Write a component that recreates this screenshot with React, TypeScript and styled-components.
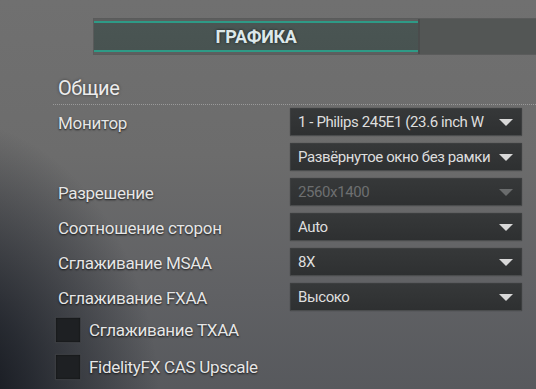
import React from "react";
import styled, { createGlobalStyle } from "styled-components";

const Global = createGlobalStyle`
  html, body { margin: 0; padding: 0; }
  body {
    width: 536px; height: 389px; overflow: hidden;
    font-family: "Roboto", "Liberation Sans", sans-serif;
  }
`;

const Page = styled.div`
  position: relative;
  width: 536px;
  height: 389px;
  overflow: hidden;
  background:
    radial-gradient(ellipse 210px 290px at -50px 410px, rgba(8,11,18,0.97) 0%, rgba(18,22,30,0.7) 40%, rgba(40,44,52,0) 100%),
    linear-gradient(180deg, #707070 0%, #6c6c6c 40%, #606164 75%, #57595d 100%);
  display: flex;
  flex-direction: column;
`;

const TabBar = styled.div`
  margin: 18px 0 0 93px;
  height: 37px;
  display: flex;
  background: #5d5e5e;
  box-sizing: border-box;
  border: 1px solid #5a5b5b;
  border-right: none;
`;

const ActiveTab = styled.div`
  width: 324px;
  box-sizing: border-box;
  border-top: 2px solid #2e9a86;
  border-bottom: 2px solid #2e9a86;
  margin: 2px 0;
  background: linear-gradient(180deg, #4a5553 0%, #485351 100%);
  display: flex;
  align-items: center;
  justify-content: center;
  color: #dce8ea;
  font-weight: bold;
  font-size: 18px;
  letter-spacing: -0.3px;
  text-shadow: 0 0 3px rgba(0,0,0,0.7);
`;

const TabDivider = styled.div`
  width: 2px;
  background: #4a4c4c;
`;

const OtherTab = styled.div`
  flex: 1;
  background: #535655;
`;

const Section = styled.div`
  padding: 21px 0 0 53px;
`;

const Heading = styled.div`
  padding-left: 5px;
  font-size: 20px;
  color: #ececec;
  line-height: 24px;
  letter-spacing: -0.4px;
  text-shadow: 0 0 3px rgba(0,0,0,0.5);
`;

const Dotted = styled.div`
  margin-top: 4px;
  height: 0;
  border-top: 1px dotted #9a9a9a;
`;

const Rows = styled.div`
  display: grid;
  grid-template-columns: 232px 232px;
  row-gap: 7px;
  padding: 3px 0 0 5px;
`;

const Label = styled.div`
  height: 28px;
  padding-top: 2px;
  box-sizing: border-box;
  display: flex;
  align-items: center;
  font-size: 17px;
  letter-spacing: -0.3px;
  color: #e6e6e6;
  text-shadow: 0 1px 2px rgba(0,0,0,0.8);
`;

const Select = styled.div<{ $disabled?: boolean }>`
  height: 28px;
  box-sizing: border-box;
  display: flex;
  align-items: center;
  padding: 0 8px 0 7px;
  background: linear-gradient(180deg, #363839 0%, #2e3031 100%);
  border: 1px solid #3c3e3f;
  border-bottom-color: #4a4c4d;
  border-radius: 1px;
  box-shadow: 0 0 1px rgba(0,0,0,0.6);
  color: ${(p) => (p.$disabled ? "#6d6f70" : "#dedede")};
  font-size: 15px;
  letter-spacing: -0.4px;
`;

const SelectText = styled.span`
  flex: 1;
  white-space: nowrap;
  overflow: hidden;
`;

const Arrow = styled.svg<{ $disabled?: boolean }>`
  flex: none;
  width: 14px;
  height: 7px;
  margin-left: 8px;
  fill: ${(p) => (p.$disabled ? "#6a6c6d" : "#d8d8d8")};
`;

const Checks = styled.div`
  display: flex;
  flex-direction: column;
  gap: 11px;
  padding: 6px 0 0 2px;
`;

const CheckRow = styled.div`
  display: flex;
  align-items: center;
  gap: 8px;
  height: 26px;
`;

const Box = styled.div`
  width: 26px;
  height: 26px;
  box-sizing: border-box;
  border: 1px solid #3a3c40;
  background: #1e2023;
  border-radius: 1px;
  box-shadow: inset 0 0 2px rgba(0,0,0,0.6), 0 0 1px rgba(120,120,120,0.4);
`;

const CheckLabel = styled.div`
  font-size: 17px;
  letter-spacing: -0.3px;
  color: #e6e6e6;
  text-shadow: 0 1px 2px rgba(0,0,0,0.8);
`;

const rows: { label: string; value: string; disabled?: boolean }[] = [
  { label: "Монитор", value: "1 - Philips 245E1 (23.6 inch W" },
  { label: "", value: "Развёрнутое окно без рамки" },
  { label: "Разрешение", value: "2560x1400", disabled: true },
  { label: "Соотношение сторон", value: "Auto" },
  { label: "Сглаживание MSAA", value: "8X" },
  { label: "Сглаживание FXAA", value: "Высоко" },
];

const DownArrow = ({ disabled }: { disabled?: boolean }) => (
  <Arrow $disabled={disabled} viewBox="0 0 14 7">
    <polygon points="0,0 14,0 7,7" />
  </Arrow>
);

export default function App() {
  return (
    <Page>
      <Global />
      <TabBar>
        <ActiveTab>ГРАФИКА</ActiveTab>
        <TabDivider />
        <OtherTab />
      </TabBar>
      <Section>
        <Heading>Общие</Heading>
        <Dotted />
        <Rows>
          {rows.map((r, i) => (
            <React.Fragment key={i}>
              <Label>{r.label}</Label>
              <Select $disabled={r.disabled}>
                <SelectText>{r.value}</SelectText>
                <DownArrow disabled={r.disabled} />
              </Select>
            </React.Fragment>
          ))}
        </Rows>
        <Checks>
          <CheckRow>
            <Box />
            <CheckLabel>Сглаживание TXAA</CheckLabel>
          </CheckRow>
          <CheckRow>
            <Box />
            <CheckLabel>FidelityFX CAS Upscale</CheckLabel>
          </CheckRow>
        </Checks>
      </Section>
    </Page>
  );
}
